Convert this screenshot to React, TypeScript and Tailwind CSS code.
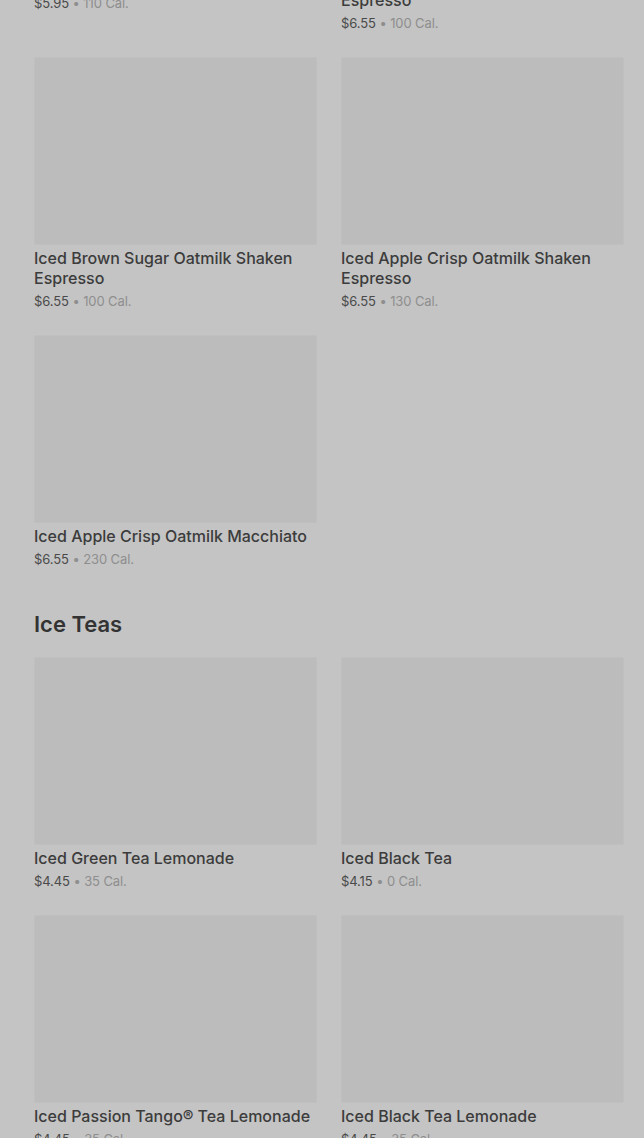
import React from "react";

type Item = { name: string; price: string; cal: string };

const Card = ({ item }: { item: Item }) => (
  <div className="flex flex-col">
    <div className="h-[188px] rounded-[2px] bg-[#bcbcbc] border border-[#bfbfbf]" />
    <div className="mt-[3px] text-[16px] leading-5 font-medium text-[#3c3c3c]">{item.name}</div>
    <div className="mt-[3px] text-[13px] leading-5 text-[#4a4a4a] tracking-[-0.1px]">
      {item.price}
      <span className="text-[#8e8e8e]"> • {item.cal}</span>
    </div>
  </div>
);

const row0: Item[] = [
  { name: "Iced Shaken Espresso", price: "$5.95", cal: "110 Cal." },
  { name: "Iced Chocolate Almondmilk Shaken Espresso", price: "$6.55", cal: "100 Cal." },
];
const espresso: Item[] = [
  { name: "Iced Brown Sugar Oatmilk Shaken Espresso", price: "$6.55", cal: "100 Cal." },
  { name: "Iced Apple Crisp Oatmilk Shaken Espresso", price: "$6.55", cal: "130 Cal." },
  { name: "Iced Apple Crisp Oatmilk Macchiato", price: "$6.55", cal: "230 Cal." },
];
const teas: Item[] = [
  { name: "Iced Green Tea Lemonade", price: "$4.45", cal: "35 Cal." },
  { name: "Iced Black Tea", price: "$4.15", cal: "0 Cal." },
  { name: "Iced Passion Tango® Tea Lemonade", price: "$4.45", cal: "35 Cal." },
  { name: "Iced Black Tea Lemonade", price: "$4.45", cal: "35 Cal." },
];

export default function App() {
  return (
    <div
      className="min-h-[1138px] bg-[#c4c4c4] pl-[34px] pr-[20px] overflow-hidden"
      style={{ fontFamily: "Inter, 'Noto Sans', sans-serif" }}
    >
      <div className="-mt-[221px] grid grid-cols-2 gap-x-6 gap-y-6">
        {[...row0, ...espresso].map((it, i) => (
          <Card key={i} item={it} />
        ))}
      </div>
      <h2 className="mt-[41px] text-[22px] leading-7 font-semibold text-[#333333]">Ice Teas</h2>
      <div className="mt-[19px] grid grid-cols-2 gap-x-6 gap-y-6 pb-10">
        {teas.map((it, i) => (
          <Card key={i} item={it} />
        ))}
      </div>
    </div>
  );
}
